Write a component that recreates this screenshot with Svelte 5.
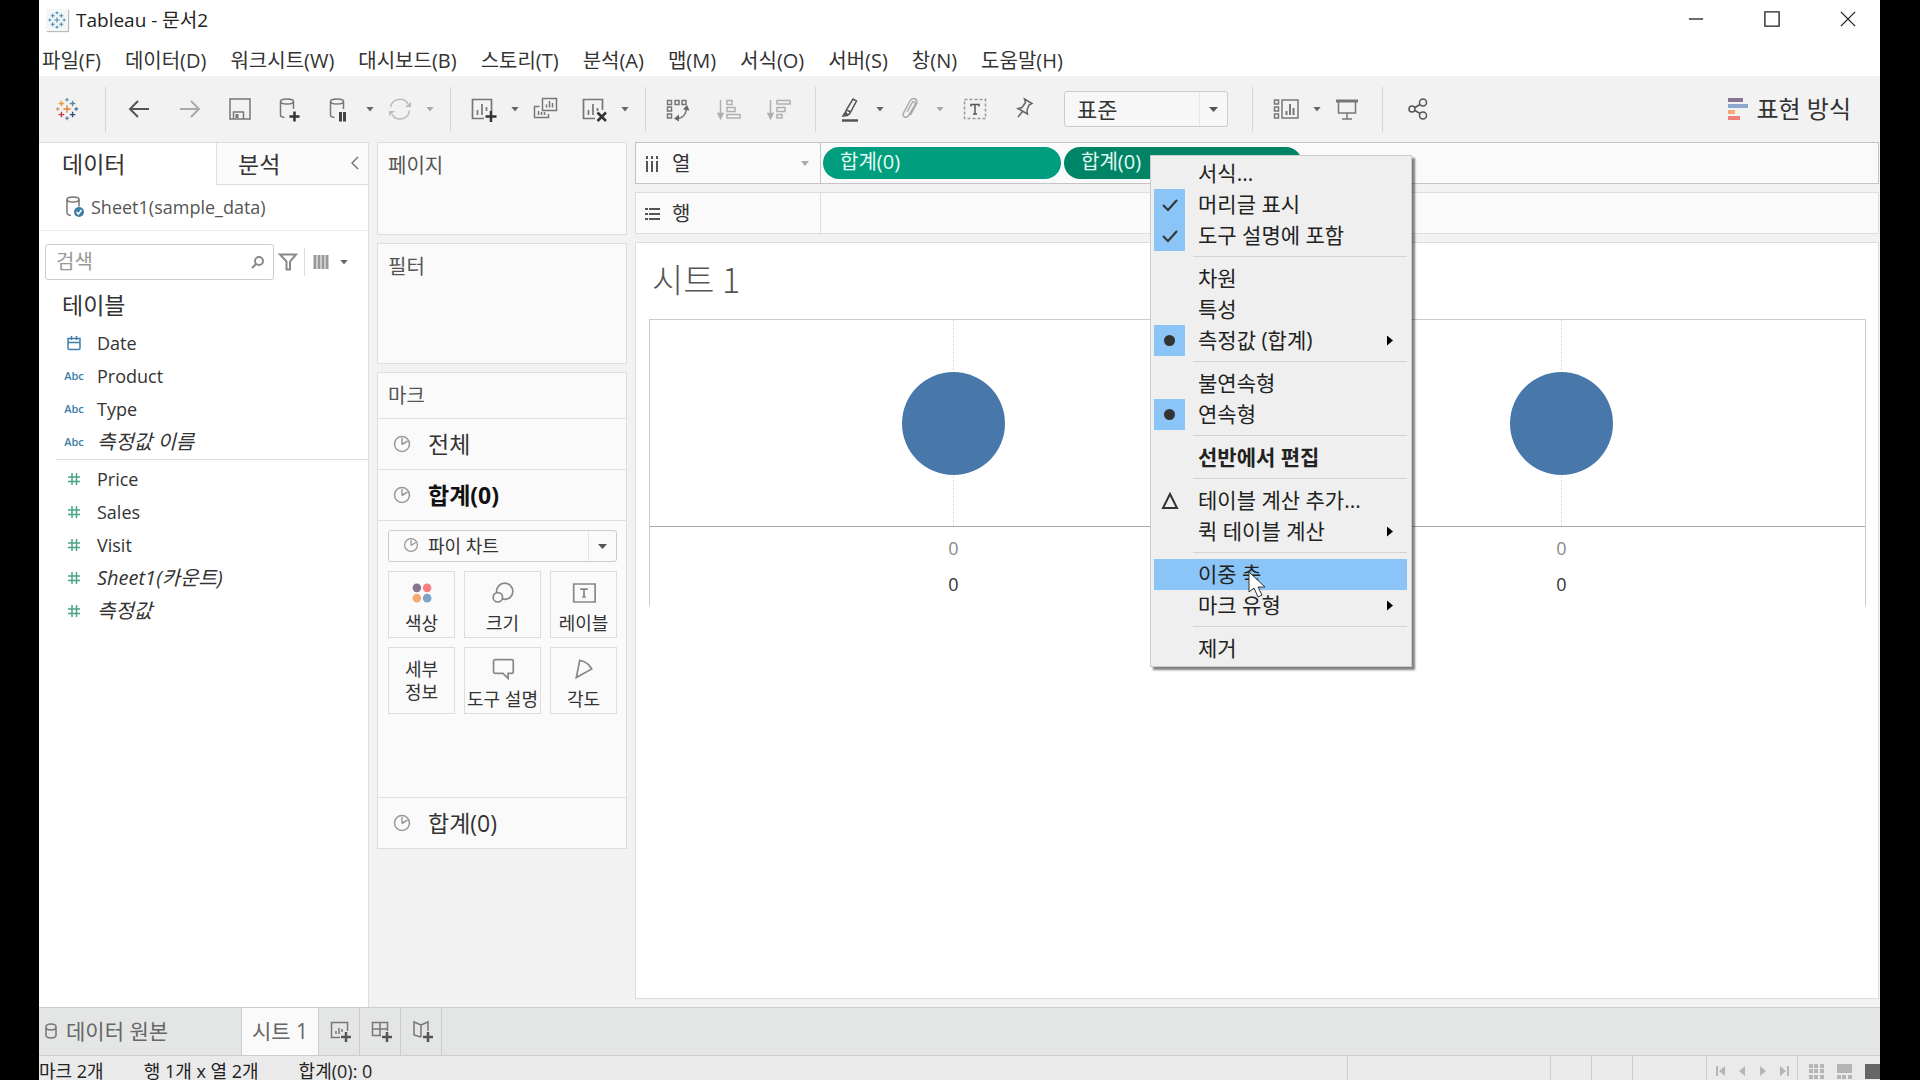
<script lang="ts">
	type Field = { icon: 'date' | 'abc' | 'num'; name: string; generated?: boolean };
	type MenuItem = { label: string; mark?: 'check' | 'radio' | 'delta'; sub?: boolean; bold?: boolean; hot?: boolean };

	const menus = ['파일(F)', '데이터(D)', '워크시트(W)', '대시보드(B)', '스토리(T)', '분석(A)', '맵(M)', '서식(O)', '서버(S)', '창(N)', '도움말(H)'];

	const dimensions: Field[] = [
		{ icon: 'date', name: 'Date' },
		{ icon: 'abc', name: 'Product' },
		{ icon: 'abc', name: 'Type' },
		{ icon: 'abc', name: '측정값 이름', generated: true }
	];
	const measures: Field[] = [
		{ icon: 'num', name: 'Price' },
		{ icon: 'num', name: 'Sales' },
		{ icon: 'num', name: 'Visit' },
		{ icon: 'num', name: 'Sheet1(카운트)', generated: true },
		{ icon: 'num', name: '측정값', generated: true }
	];

	const markButtons = [
		{ icon: 'color', label: '색상' },
		{ icon: 'size', label: '크기' },
		{ icon: 'label', label: '레이블' },
		{ icon: '', label: '세부 정보' },
		{ icon: 'tooltip', label: '도구 설명' },
		{ icon: 'angle', label: '각도' }
	];

	const contextMenu: MenuItem[][] = [
		[{ label: '서식...' }, { label: '머리글 표시', mark: 'check' }, { label: '도구 설명에 포함', mark: 'check' }],
		[{ label: '차원' }, { label: '특성' }, { label: '측정값 (합계)', mark: 'radio', sub: true }],
		[{ label: '불연속형' }, { label: '연속형', mark: 'radio' }],
		[{ label: '선반에서 편집', bold: true }],
		[{ label: '테이블 계산 추가...', mark: 'delta' }, { label: '퀵 테이블 계산', sub: true }],
		[{ label: '이중 축', hot: true }, { label: '마크 유형', sub: true }],
		[{ label: '제거' }]
	];

	// Inner markup of the 28x28 icons
	const icons: Record<string, string> = {
		back: '<path d="M23 14H4M12 6l-8 8 8 8" stroke="#555" stroke-width="2"/>',
		forward: '<path d="M4 14h19M15 6l8 8-8 8" stroke="#aaa" stroke-width="2"/>',
		save: '<path d="M4 4h20v20H4zM7.500 24v-7h10v7"/><path d="M9.500 19h3v4h-3z" fill="#777" stroke="none"/>',
		addData: '<ellipse cx="11" cy="6.500" rx="6.500" ry="2.500"/><path d="M4.500 6.500V20q0 2 4 2.500M17.500 6.500V14"/><path d="M18.500 16.500v10M13.500 21.500h10" stroke="#333" stroke-width="2.500"/>',
		pauseData: '<ellipse cx="11" cy="6.500" rx="6.500" ry="2.500"/><path d="M4.500 6.500V20q0 2 4 2.500M17.500 6.500V14"/><path d="M14.500 17v9.500M18.500 17v9.500" stroke="#444" stroke-width="3"/>',
		refresh: '<path d="M4.500 12a9.500 9.500 0 0 1 17.500-3M23.500 15.500A9.500 9.500 0 0 1 6 19.500" stroke="#bbb" stroke-width="1.500"/><path d="M25 7v5h-6zM3 21v-5h6z" fill="#bbb" stroke="none"/>',
		addSheet: '<path d="M13 23.500H1.500v-19h19V16M6.500 20v-5M11 20V9M15.500 16v-4" stroke-width="1.700"/><path d="M20 16v11M14.500 21.500h11" stroke="#333" stroke-width="2.500"/>',
		dupSheet: '<path d="M11.500 3.500h14v12h-14zM8.500 11.500h-5v11h14V19M15.500 12.500v-3M18.500 12.500V6M21.500 12.500V8M7.500 20v-4M10.500 20v-3M13.500 20v-3"/>',
		clearSheet: '<path d="M14 23.500H2.500v-19h19V15M7.500 20v-5M12 20V9M16.500 16v-3" stroke-width="1.700"/><path d="M16.500 17.500l8.500 8.500M25 17.500L16.500 26" stroke="#333" stroke-width="2.500"/>',
		swap: '<path d="M1.500 5.500h4v4h-4zM9 5.500h4v4H9zM16 5.500h4v4h-4zM1.500 12h4v4h-4zM1.500 19h4v4h-4z"/><path d="M20.500 14q-1 8-8 9.500"/><path d="M17 14.500l4-4.500 2.500 5.500zM13 19.500L8 23.500l5 3z" fill="#666" stroke="none"/>',
		sortAsc: '<g stroke="#b0b0b0"><path d="M4.500 5v17M11 5.500h5v4h-5zM11 12.500h8v4h-8zM11 19.500h13v3.500H11z"/><path d="M2 18.500h5l-2.500 5z" fill="#aaa"/></g>',
		sortDesc: '<g stroke="#b0b0b0"><path d="M4.500 5v17M11 5.500h13v3.500H11zM11 12.500h8v4h-8zM11 19.500h5v3.500h-5z"/><path d="M2 18.500h5l-2.500 5z" fill="#aaa"/></g>',
		highlight: '<path d="M17 4l3.500 2-7 13-4 1 .500-4.500zM10 14.500l4.500 2.500M7 21l2.500-4 2 3.500z" stroke="#555"/><path d="M6 25.500h16" stroke="#555" stroke-width="2.500"/>',
		clip: '<path d="M11 17l5-9q1-2 2.500-1t.500 3l-6 10q-2 3-4.500 2t-.500-5l6-11q2-3.500 5-2t1.500 5l-6 11" stroke="#aaa"/>',
		text: '<path d="M3.500 4.500h21v19h-21z" stroke-dasharray="3 2" stroke="#999"/><path d="M10 11.500V9.500h8v2M14 9.500v9M12 19h4" stroke="#555"/>',
		pin: '<path d="M13.500 4l7.500 4.500-3 1.500-2 5 .500 4-9.500-5.500 4-1 3.500-5zM11.500 16.500L7 22" stroke="#666"/>',
		cards: '<path d="M1.500 5h4v4h-4zM1.500 12h4v4h-4zM1.500 19h4v4h-4zM9 5h16v18H9z"/><path d="M13.500 20v-4M17 20V9M20.500 20v-7" stroke-width="2"/>',
		present: '<path d="M3 6h22" stroke-width="3"/><path d="M5.500 6v12h17V6M14 18v6M9 24h10"/>',
		share: '<g stroke="#555"><circle cx="9" cy="14" r="3"/><circle cx="20" cy="7.500" r="3.500"/><circle cx="20" cy="20.500" r="3.500"/><path d="M12 12.500l5-3M12 15.500l5 3"/></g>',
		pie: '<circle cx="14" cy="14" r="7.500" stroke="#999"/><path d="M14 14.500V8M14 14.500l5.500-3.500" stroke="#999"/>',
		color: '<g stroke="none"><circle cx="8" cy="8" r="5" fill="#857591"/><circle cx="20" cy="8" r="5" fill="#f47f7f"/><circle cx="8" cy="20" r="5" fill="#f3aa72"/><circle cx="20" cy="20" r="5" fill="#7ea2cc"/></g>',
		size: '<circle cx="16" cy="12" r="9.500"/><circle cx="8" cy="19" r="5.500" fill="#fafafa"/>',
		label: '<path d="M2 3.500h25v21H2z"/><path d="M10.500 10.500V9.500h7v1M14 9.500v9M12 18.500h4"/>',
		tooltip: '<path d="M4 3h20q2 0 2 2v12q0 2-2 2h-4v6l-6-6H5q-2 0-2-2V5q0-2 2-2"/>',
		angle: '<path d="M9 4l-4 20 18-10q-4-8-14-10z"/>',
		date: '<path d="M8 9.500h12V19q0 1.500-1.500 1.500h-9Q8 20.500 8 19zM8 13.500h12M11.500 7v4M16.500 7v4" stroke="#3d7ea6"/>',
		num: '<path d="M12 8v12M16.500 8v12M8 12h12M8 16.500h12" stroke="#4aa583"/>',
		source: '<ellipse cx="11" cy="6.500" rx="6" ry="2.500"/><path d="M5 6.500v13q0 2.500 4 3M17 6.500v7"/><circle cx="17" cy="19" r="5" fill="#3a80aa" stroke="none"/><path d="M14.500 19l2 2 3-4" stroke="#fff"/>',
		newSheet: '<path d="M14 20.500H5.500v-15h16V14M10 17v-3M13 17v-6M16 15v-3"/><path d="M20 15v10M15 20h10" stroke="#555" stroke-width="2.500"/>',
		newDash: '<path d="M14 18.500H5.500v-13h15V14M13 5.500v13M5.500 12h15"/><path d="M20 15v10M15 20h10" stroke="#555" stroke-width="2.500"/>',
		newStory: '<path d="M13 20l-7-2V5l7 3 7-3v9M13 8v12"/><path d="M20 15v10M15 20h10" stroke="#555" stroke-width="2.500"/>',
		filter: '<path d="M6 6.500h16l-6 7v8h-3.500v-8z"/>'
	};

	// dx, dy, arm length and colour of every cross in the logo
	const crosses: [number, number, number, string][] = [
		[0, 0, 4, '#e8833a'],
		[0, -10, 2, '#7b9bb5'],
		[0, 10, 2, '#7b8a9b'],
		[-10, 0, 2, '#c9a27c'],
		[10, 0, 2, '#55759c'],
		[-6, -6, 3, '#eb9a3c'],
		[6, -6, 3, '#5d86a0'],
		[-6, 6, 3, '#c8393b'],
		[6, 6, 3, '#2c4a80']
	];
</script>

{#snippet icon(name: string)}
	<svg class="icon" viewBox="0 0 28 28" aria-hidden="true">{@html icons[name]}</svg>
{/snippet}

{#snippet logo(mono: boolean)}
	<svg class="logo" viewBox="-14 -14 28 28" aria-hidden="true">
		{#each crosses as [x, y, r, color]}
			<path d="M{x - r} {y}h{r * 2}M{x} {y - r}v{r * 2}" stroke={mono ? '#4a8db5' : color} />
		{/each}
	</svg>
{/snippet}

{#snippet tool(name: string, title: string)}
	<button class="tool" aria-label={title}>{@render icon(name)}</button>
{/snippet}

{#snippet caret(faded: boolean)}
	<button class="caret" class:faded aria-label="옵션"></button>
{/snippet}

{#snippet fieldRow(f: Field)}
	<li class="field" class:generated={f.generated}>
		{#if f.icon === 'abc'}
			<span class="abc">Abc</span>
		{:else}
			{@render icon(f.icon)}
		{/if}
		<span>{f.name}</span>
	</li>
{/snippet}

<div class="screen">
	<div class="window">
		<header class="titlebar">
			<span class="app-icon">{@render logo(true)}</span>
			<h1>Tableau - 문서2</h1>
			<div class="window-buttons">
				<button aria-label="최소화"><svg viewBox="0 0 18 18"><path d="M1 9h16" /></svg></button>
				<button aria-label="최대화"><svg viewBox="0 0 18 18"><path d="M1 1h16v16H1z" /></svg></button>
				<button aria-label="닫기"><svg viewBox="0 0 18 18"><path d="M1 1l16 16M17 1L1 17" /></svg></button>
			</div>
		</header>

		<nav class="menubar">
			{#each menus as m}
				<button>{m}</button>
			{/each}
		</nav>

		<div class="toolbar">
			<button class="tool start" aria-label="시작 페이지">{@render logo(false)}</button>
			<i class="sep"></i>
			<div class="group">
				{@render tool('back', '실행 취소')}
				{@render tool('forward', '다시 실행')}
				{@render tool('save', '저장')}
				{@render tool('addData', '새 데이터 원본')}
				{@render tool('pauseData', '자동 업데이트 일시 중지')}
				{@render caret(false)}
				{@render tool('refresh', '업데이트 실행')}
				{@render caret(true)}
			</div>
			<i class="sep"></i>
			<div class="group">
				{@render tool('addSheet', '새 워크시트')}
				{@render caret(false)}
				{@render tool('dupSheet', '복제')}
				{@render tool('clearSheet', '시트 지우기')}
				{@render caret(false)}
			</div>
			<i class="sep"></i>
			{@render tool('swap', '행과 열 바꾸기')}
			{@render tool('sortAsc', '오름차순 정렬')}
			{@render tool('sortDesc', '내림차순 정렬')}
			<i class="sep"></i>
			<div class="group">
				{@render tool('highlight', '하이라이트')}
				{@render caret(false)}
				{@render tool('clip', '구성원 그룹화')}
				{@render caret(true)}
			</div>
			{@render tool('text', '마크 레이블 표시')}
			{@render tool('pin', '축 고정')}
			<div class="fit">
				<select aria-label="맞춤"><option>표준</option></select>
			</div>
			<i class="sep"></i>
			{@render tool('cards', '카드 표시')}
			{@render caret(false)}
			{@render tool('present', '프레젠테이션 모드')}
			<i class="sep"></i>
			{@render tool('share', '공유')}
			<button class="show-me">
				<svg viewBox="0 0 20 22" aria-hidden="true">
					<path d="M0 2h15" stroke="#857591" />
					<path d="M0 8h20" stroke="#8aa9cc" />
					<path d="M0 14h7" stroke="#f3aa72" />
					<path d="M0 20h12" stroke="#ee7f7a" />
				</svg>
				표현 방식
			</button>
		</div>

		<main>
			<aside class="data-pane">
				<div class="pane-tabs">
					<button class="active">데이터</button>
					<button>분석</button>
					<button class="collapse" aria-label="접기"><svg viewBox="0 0 8 14"><path d="M7 1L1 7l6 6" /></svg></button>
				</div>
				<div class="source">{@render icon('source')}<span>Sheet1(sample_data)</span></div>
				<div class="search">
					<label class="search-box">
						<input type="text" placeholder="검색" aria-label="검색" />
						<svg viewBox="0 0 14 14"><circle cx="8" cy="6" r="4" /><path d="M5 9l-4 4" /></svg>
					</label>
					<button class="mini" aria-label="필터">{@render icon('filter')}</button>
					<button class="view-as" aria-label="보기 방식">
						<svg viewBox="0 0 16 14"><path d="M2 0v14M6 0v14M10 0v14M14 0v14" /></svg>
					</button>
					{@render caret(false)}
				</div>
				<h2>테이블</h2>
				<ul class="fields">
					{#each dimensions as f}{@render fieldRow(f)}{/each}
				</ul>
				<ul class="fields measures">
					{#each measures as f}{@render fieldRow(f)}{/each}
				</ul>
			</aside>

			<div class="cards">
				<section class="card pages"><h3>페이지</h3></section>
				<section class="card filters"><h3>필터</h3></section>
				<section class="card marks">
					<h3>마크</h3>
					<button class="mark-row">{@render icon('pie')}전체</button>
					<button class="mark-row current">{@render icon('pie')}합계(0)</button>
					<div class="mark-body">
						<div class="mark-type">
							{@render icon('pie')}
							<select aria-label="마크 유형"><option>파이 차트</option></select>
						</div>
						<div class="mark-grid">
							{#each markButtons as b}
								<button>
									{#if b.icon}{@render icon(b.icon)}{/if}
									<span class:narrow={!b.icon}>{b.label}</span>
								</button>
							{/each}
						</div>
					</div>
					<button class="mark-row">{@render icon('pie')}합계(0)</button>
				</section>
			</div>

			<div class="sheet">
				<div class="shelf columns">
					<div class="shelf-name">
						<svg viewBox="0 0 15 16"><path d="M2 0v3M7 0v3M12 0v3M2 5v11M7 5v11M12 5v11" /></svg>
						열
						{@render caret(true)}
					</div>
					<div class="pills">
						<button class="pill">합계(0)</button>
						<div class="pill-wrap">
							<button class="pill selected">합계(0)</button>
							<div class="context-menu" role="menu">
								{#each contextMenu as group}
									<div class="menu-group">
										{#each group as item}
											<button role="menuitem" class:hot={item.hot} class:bold={item.bold}>
												<span class="mark" class:on={item.mark === 'check' || item.mark === 'radio'}>
													{#if item.mark === 'check'}
														<svg viewBox="0 0 18 14"><path d="M2 7l5 5 9-10" /></svg>
													{:else if item.mark === 'radio'}
														<i class="dot"></i>
													{:else if item.mark === 'delta'}
														<svg viewBox="0 0 18 18"><path d="M9 2l7 14H2z" /></svg>
													{/if}
												</span>
												<span class="text">{item.label}</span>
												{#if item.sub}<i class="arrow"></i>{/if}
											</button>
										{/each}
									</div>
								{/each}
								<svg class="cursor" viewBox="0 0 18 28">
									<path d="M1 1v20l5-4 4 9 4-2-4-8h7z" fill="#fff" stroke="#333" />
								</svg>
							</div>
						</div>
					</div>
				</div>
				<div class="shelf">
					<div class="shelf-name">
						<svg viewBox="0 0 15 16"><path d="M0 3h3M0 8h3M0 13h3M4 3h11M4 8h11M4 13h11" /></svg>
						행
					</div>
				</div>

				<section class="view">
					<h2>시트 1</h2>
					<div class="chart">
						{#each [0, 0] as value}
							<div class="pane">
								<div class="plot"><i class="circle"></i></div>
								<div class="axis"><span>{value}</span><strong>{value}</strong></div>
							</div>
						{/each}
					</div>
				</section>
			</div>
		</main>

		<footer>
			<div class="sheet-tabs">
				<button class="data-source">
					<svg viewBox="0 0 12 16"><path d="M1 4q0-3 5-3t5 3v8q0 3-5 3t-5-3zM1 4q0 3 5 3t5-3" /></svg>
					데이터 원본
				</button>
				<button class="active">시트 1</button>
				<button class="new" aria-label="새 워크시트">{@render icon('newSheet')}</button>
				<button class="new" aria-label="새 대시보드">{@render icon('newDash')}</button>
				<button class="new" aria-label="새 스토리">{@render icon('newStory')}</button>
			</div>
			<div class="status">
				<span>마크 2개</span>
				<span>행 1개 x 열 2개</span>
				<span>합계(0): 0</span>
				<i class="cell wide"></i>
				<i class="cell small"></i>
				<i class="cell small"></i>
				<i class="cell mid"></i>
				<div class="cell nav">
					<button aria-label="처음"><svg viewBox="0 0 10 12"><path d="M0 1h2v10H0zM9 1v10L3 6z" /></svg></button>
					<button aria-label="이전"><svg viewBox="0 0 10 12"><path d="M8 1v10L2 6z" /></svg></button>
					<button aria-label="다음"><svg viewBox="0 0 10 12"><path d="M2 1v10l6-5z" /></svg></button>
					<button aria-label="마지막"><svg viewBox="0 0 10 12"><path d="M8 1h2v10H8zM1 1v10l6-5z" /></svg></button>
				</div>
				<div class="cell modes">
					<button aria-label="시트 정렬기"><svg viewBox="0 0 15 15"><path d="M0 0h4v4H0zM5 0h4v4H5zM11 0h4v4h-4zM0 5h4v4H0zM5 5h4v4H5zM11 5h4v4h-4zM0 11h4v4H0zM5 11h4v4H5zM11 11h4v4h-4z" /></svg></button>
					<button aria-label="필름 스트립"><svg viewBox="0 0 15 15"><path d="M0 0h15v9H0zM0 11h4v4H0zM5 11h4v4H5zM11 11h4v4h-4z" /></svg></button>
					<button class="on" aria-label="탭"><svg viewBox="0 0 15 15"><path d="M0 0h15v15H0z" /></svg></button>
				</div>
			</div>
		</footer>
	</div>
</div>

<style>
	:global(body) {
		margin: 0;
		background: #000;
	}
	.screen {
		height: 100vh;
		padding: 0 40px 0 39px;
		box-sizing: border-box;
		background: #000;
		overflow: hidden;
	}
	.screen,
	button,
	input,
	select {
		font-family: 'Open Sans', 'Noto Sans CJK KR', sans-serif;
		font-size: 20px;
		line-height: 24px;
		color: #333;
	}
	.screen * {
		box-sizing: border-box;
	}
	button {
		padding: 0;
		border: 0;
		background: none;
	}
	h1,
	h2,
	h3,
	ul {
		margin: 0;
		padding: 0;
		font-weight: 400;
	}
	svg {
		fill: none;
		flex: none;
	}
	.icon,
	.logo {
		display: block;
		width: 28px;
		height: 28px;
		stroke: #777;
		stroke-width: 1.5;
	}
	.window {
		display: flex;
		flex-direction: column;
		height: 100%;
		background: #f2f2f2;
	}

	/* title and menu bars */
	.titlebar {
		display: flex;
		align-items: center;
		height: 40px;
		padding-left: 7px;
		background: #fff;
	}
	.app-icon {
		padding: 1px;
		background: #f4f6f7;
		box-shadow: 1px 1px 1px #bbb;
	}
	.app-icon .logo {
		width: 20px;
		height: 20px;
	}
	.titlebar h1 {
		margin-left: 8px;
		font-size: 19px;
		color: #222;
	}
	.window-buttons {
		display: flex;
		gap: 12px;
		margin-left: auto;
	}
	.window-buttons button {
		width: 64px;
		height: 38px;
	}
	.window-buttons svg {
		width: 16px;
		height: 16px;
		stroke: #222;
		stroke-width: 1.5;
	}
	.menubar {
		display: flex;
		gap: 24px;
		height: 36px;
		padding: 0 3px;
		background: #fff;
	}
	.menubar button {
		height: 42px;
		color: #333;
	}

	/* toolbar */
	.toolbar {
		display: flex;
		align-items: center;
		height: 66px;
	}
	.tool {
		display: flex;
		justify-content: center;
		width: 50px;
	}
	.tool.start {
		width: 56px;
	}
	.start .logo {
		width: 26px;
		height: 26px;
	}
	.sep {
		width: 1px;
		height: 45px;
		margin: 0 9px 0 10px;
		background: #d5d5d5;
	}
	.group {
		display: flex;
		align-items: center;
		padding-right: 5px;
	}
	.caret {
		width: 10px;
		height: 28px;
	}
	.caret::before {
		content: '';
		display: block;
		width: 8px;
		height: 5px;
		margin: 0 auto;
		background: #666;
		clip-path: polygon(0 0, 100% 0, 50% 100%);
	}
	.caret.faded::before {
		background: #aaa;
	}
	.fit,
	.mark-type {
		position: relative;
	}
	.fit {
		width: 164px;
		margin: 0 14px;
	}
	select {
		width: 100%;
		height: 36px;
		padding: 0 12px;
		appearance: none;
		border: 1px solid #ccc;
		border-radius: 3px;
		background: #f7f7f7;
	}
	.fit select {
		font-size: 22px;
	}
	.fit::before,
	.mark-type::before {
		content: '';
		position: absolute;
		top: 1px;
		bottom: 1px;
		right: 28px;
		width: 1px;
		background: #e6e6e6;
	}
	.fit::after,
	.mark-type::after {
		content: '';
		position: absolute;
		top: calc(50% - 2px);
		right: 10px;
		width: 9px;
		height: 5px;
		background: #555;
		clip-path: polygon(0 0, 100% 0, 50% 100%);
	}
	.show-me {
		display: flex;
		align-items: center;
		gap: 8px;
		margin-left: auto;
		padding-right: 29px;
		font-size: 24px;
	}
	.show-me svg {
		width: 20px;
		height: 22px;
		stroke-width: 4;
	}

	main {
		display: flex;
		flex: 1;
		gap: 8px;
		min-height: 0;
		padding-right: 1px;
	}

	/* data pane */
	.data-pane {
		width: 330px;
		border: solid #ddd;
		border-width: 1px 1px 0 0;
		background: #fff;
	}
	.pane-tabs {
		display: flex;
		height: 42px;
	}
	.pane-tabs button {
		padding-left: 21px;
		border-bottom: 1px solid #ddd;
		background: #fafafa;
		font-size: 23px;
		text-align: left;
	}
	.pane-tabs .active {
		width: 178px;
		padding-left: 23px;
		border-right: 1px solid #ddd;
		border-bottom: 0;
		background: #fff;
	}
	.pane-tabs .collapse {
		flex: 1;
		padding: 0 9px 6px 0;
		text-align: right;
	}
	.collapse svg {
		width: 8px;
		height: 14px;
		stroke: #777;
		stroke-width: 1.5;
	}
	.source {
		display: flex;
		align-items: center;
		gap: 1px;
		height: 46px;
		padding: 0 0 2px 23px;
		border-bottom: 1px solid #eee;
		font-size: 18px;
		color: #555;
	}
	.search {
		display: flex;
		align-items: center;
		padding: 13px 19px 10px 6px;
	}
	.search-box {
		display: flex;
		flex: 1;
		align-items: center;
		height: 36px;
		padding-right: 8px;
		border: 1px solid #ccc;
		border-radius: 3px;
	}
	.search-box input {
		width: 100%;
		padding: 0 10px;
		border: 0;
		outline: 0;
		background: none;
	}
	.search-box input::placeholder {
		color: #999;
	}
	.search-box svg {
		width: 14px;
		height: 14px;
		stroke: #888;
		stroke-width: 2;
	}
	.mini .icon {
		stroke-width: 2;
		stroke: #888;
	}
	.view-as {
		height: 28px;
		margin: 0 10px 0 2px;
		padding-left: 8px;
		border-left: 1px solid #ddd;
	}
	.view-as svg {
		width: 16px;
		height: 14px;
		stroke: #999;
		stroke-width: 3;
	}
	.data-pane h2 {
		height: 36px;
		padding-left: 23px;
		font-size: 23px;
		line-height: 30px;
	}
	.fields {
		margin-left: 17px;
		list-style: none;
	}
	.measures {
		margin-top: 1px;
		padding-top: 2px;
		border-top: 1px solid #ddd;
	}
	.field {
		display: flex;
		align-items: center;
		gap: 9px;
		height: 33px;
		padding-left: 4px;
		font-size: 18px;
	}
	.field.generated {
		font-size: 20px;
		font-style: italic;
	}
	.abc {
		width: 28px;
		color: #3d7ea6;
		font-size: 11px;
		font-style: normal;
		font-weight: 600;
		text-align: center;
	}

	/* cards */
	.cards {
		display: flex;
		flex-direction: column;
		gap: 8px;
		width: 250px;
	}
	.card {
		border: 1px solid #ddd;
		background: #fafafa;
	}
	.card h3 {
		height: 45px;
		padding-left: 10px;
		font-size: 20px;
		line-height: 46px;
		color: #555;
	}
	.pages {
		height: 93px;
	}
	.filters {
		height: 121px;
	}
	.mark-row {
		display: flex;
		align-items: center;
		gap: 12px;
		width: 100%;
		height: 51px;
		padding: 0 0 1px 10px;
		border-top: 1px solid #e0e0e0;
		font-size: 23px;
	}
	.mark-row.current {
		font-weight: 700;
		color: #111;
	}
	.mark-body {
		height: 277px;
		padding: 9px 9px 0 10px;
		border-top: 1px solid #e0e0e0;
	}
	.mark-type .icon {
		position: absolute;
		left: 11px;
		top: 3px;
		width: 24px;
		height: 24px;
	}
	.mark-type select {
		height: 32px;
		padding-left: 39px;
		background: #fafafa;
		font-size: 18px;
	}
	.mark-grid {
		display: grid;
		grid-template-columns: 67px 1fr 67px;
		gap: 9px;
		margin-top: 9px;
	}
	.mark-grid button {
		display: flex;
		flex-direction: column;
		align-items: center;
		justify-content: center;
		gap: 7px;
		height: 67px;
		border: 1px solid #ddd;
		font-size: 18px;
		line-height: 23px;
		white-space: nowrap;
	}
	.mark-grid .icon {
		width: 24px;
		height: 24px;
		margin-top: 6px;
		stroke-width: 2;
		stroke: #888;
	}
	.mark-grid .narrow {
		width: 40px;
		white-space: normal;
	}

	/* shelves */
	.sheet {
		display: flex;
		flex: 1;
		flex-direction: column;
		gap: 8px;
		min-width: 0;
		padding-bottom: 8px;
	}
	.shelf {
		display: flex;
		height: 42px;
		border: 1px solid #ddd;
		background: #fafafa;
	}
	.shelf.columns {
		border-color: #c4c4c4;
	}
	.columns .shelf-name {
		border-color: #c4c4c4;
	}
	.shelf-name {
		display: flex;
		align-items: center;
		gap: 12px;
		width: 185px;
		padding: 1px 10px 0 9px;
		border-right: 1px solid #ddd;
	}
	.shelf-name svg {
		width: 15px;
		height: 16px;
		stroke: #555;
		stroke-width: 2;
	}
	.shelf-name .caret {
		margin-left: auto;
	}
	.pills {
		display: flex;
		gap: 3px;
		padding: 4px 2px;
	}
	.pill {
		display: block;
		width: 238px;
		height: 32px;
		padding: 0 0 3px 17px;
		border-radius: 16px;
		background: #009e7e;
		color: #e4fbf4;
		text-align: left;
	}
	.pill.selected {
		background: #008466;
	}
	.pill-wrap {
		position: relative;
	}

	/* context menu */
	.context-menu {
		position: absolute;
		z-index: 2;
		left: 86px;
		top: 8px;
		width: 262px;
		padding: 2px 4px 2px 3px;
		border: 1px solid #ccc;
		background: #efefef;
		box-shadow: 3px 3px 2px rgba(0, 0, 0, 0.5);
	}
	.menu-group + .menu-group::before {
		content: '';
		display: block;
		height: 1px;
		margin: 5px 0 6px 39px;
		background: #d3d3d3;
	}
	.context-menu button {
		display: flex;
		align-items: center;
		width: 100%;
		height: 31px;
		padding-right: 14px;
		font-size: 21px;
		color: #222;
	}
	.context-menu .hot {
		background: #8bc4f6;
	}
	.context-menu .bold {
		font-weight: 700;
	}
	.context-menu .text {
		padding-bottom: 2px;
	}
	.context-menu .mark {
		display: flex;
		align-items: center;
		justify-content: center;
		width: 31px;
		height: 31px;
		margin-right: 13px;
	}
	.mark.on {
		background: #8bc4f6;
	}
	.mark svg {
		width: 18px;
		stroke: #333;
		stroke-width: 2;
	}
	.dot {
		width: 11px;
		height: 11px;
		border-radius: 50%;
		background: #333;
	}
	.arrow {
		width: 6px;
		height: 10px;
		margin-left: auto;
		background: #000;
		clip-path: polygon(0 0, 100% 50%, 0 100%);
	}
	.cursor {
		position: absolute;
		left: 97px;
		top: 415px;
		width: 18px;
		height: 28px;
	}

	/* view */
	.view {
		flex: 1;
		padding: 15px 12px 0 13px;
		border: 1px solid #ddd;
		background: #fff;
	}
	.view h2 {
		height: 61px;
		padding-left: 3px;
		font-family: 'Noto Sans CJK KR', sans-serif;
		font-size: 34px;
		font-weight: 300;
		line-height: 42px;
		color: #555;
	}
	.chart {
		display: flex;
		border-left: 1px solid #ccc;
	}
	.pane {
		flex: 1;
		border-right: 1px solid #ccc;
	}
	.plot {
		display: flex;
		align-items: center;
		justify-content: center;
		height: 208px;
		border: solid #ccc;
		border-width: 1px 0;
		border-bottom-color: #aaa;
		background: repeating-linear-gradient(#ddd 0 2px, #fff 2px 4px) center / 1px 100% no-repeat;
	}
	.circle {
		width: 103px;
		height: 103px;
		border-radius: 50%;
		background: #4878aa;
	}
	.axis {
		display: flex;
		flex-direction: column;
		align-items: center;
		gap: 12px;
		height: 79px;
		padding-top: 9px;
		font-size: 18px;
		color: #888;
	}
	.axis strong {
		font-weight: 400;
		color: #333;
	}

	/* bottom bars */
	.sheet-tabs {
		display: flex;
		height: 49px;
		border: solid #ccc;
		border-width: 1px 0;
		background: #e4e6e6;
	}
	.sheet-tabs button {
		padding-bottom: 2px;
		border-right: 1px solid #ccc;
		font-size: 21px;
		color: #666;
	}
	.sheet-tabs .data-source {
		display: flex;
		align-items: center;
		gap: 9px;
		width: 203px;
		padding-left: 6px;
	}
	.data-source svg {
		width: 12px;
		height: 16px;
		stroke: #777;
		stroke-width: 1.5;
	}
	.sheet-tabs .active {
		width: 77px;
		background: #fafafa;
	}
	.sheet-tabs .new {
		width: 41px;
		padding-left: 7px;
	}
	.status {
		display: flex;
		height: 24px;
		background: #eaeaea;
		font-size: 18px;
		line-height: 31px;
		white-space: nowrap;
	}
	.status span {
		margin-right: 40px;
		color: #222;
	}
	.cell {
		display: flex;
		align-items: flex-start;
		border-left: 1px solid #ccc;
	}
	.cell.wide {
		width: 203px;
		margin-left: auto;
	}
	.cell.small {
		width: 41px;
	}
	.cell.mid {
		width: 74px;
	}
	.cell.nav {
		gap: 11px;
		width: 91px;
		padding: 9px 0 0 9px;
	}
	.cell.modes {
		gap: 13px;
		padding: 8px 0 0 11px;
	}
	.cell button {
		display: flex;
	}
	.cell svg {
		fill: #b5b5b5;
		width: 15px;
		height: 15px;
	}
	.cell.nav svg {
		width: 10px;
		height: 12px;
	}
	.cell .on svg {
		fill: #666;
	}
</style>
